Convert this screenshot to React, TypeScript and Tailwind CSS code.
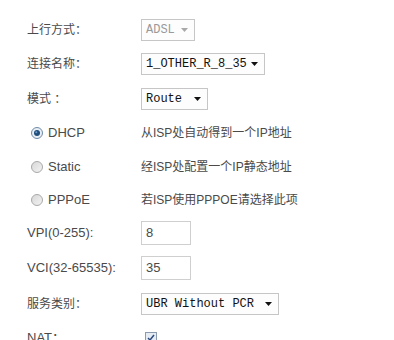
import React from "react";

const cjk = { fontFamily: '"Liberation Sans", "Noto Sans CJK SC", sans-serif' };
const mono = { fontFamily: '"Liberation Mono", "Noto Sans CJK SC", monospace' };

function Arrow({ gray }: { gray?: boolean }) {
  return (
    <svg width="7" height="4" viewBox="0 0 7 4" className="shrink-0">
      <path d="M0 0h7L3.5 4z" fill={gray ? "#a8a8a8" : "#111"} />
    </svg>
  );
}

function FakeSelect({ text, width, gray }: { text: string; width: string; gray?: boolean }) {
  return (
    <div
      className={`${width} h-[22px] border border-[#c6c6c6] bg-[#fdfdfd] flex items-center justify-between pl-[4px] pr-[6px] text-[12px] ${gray ? "text-[#9a9a9a]" : "text-[#111]"}`}
      style={mono}
    >
      <span className="whitespace-pre">{text}</span>
      <Arrow gray={gray} />
    </div>
  );
}

function Label({ children }: { children: React.ReactNode }) {
  return (
    <div className="w-[114px] shrink-0 text-[12px] text-[#4a4a4a]" style={cjk}>
      {children}
    </div>
  );
}

function Radio({ checked }: { checked?: boolean }) {
  return checked ? (
    <svg width="12" height="12" viewBox="0 0 12 12" className="shrink-0">
      <circle cx="6" cy="6" r="5.5" fill="#e8eef4" stroke="#6e8aa6" />
      <circle cx="6" cy="6" r="3" fill="#1f4e7a" />
      <circle cx="5.3" cy="5.3" r="1" fill="#6f9ccc" />
    </svg>
  ) : (
    <svg width="12" height="12" viewBox="0 0 12 12" className="shrink-0">
      <defs>
        <linearGradient id="rg" x1="0" y1="0" x2="1" y2="1">
          <stop offset="0" stopColor="#d6d6d6" />
          <stop offset="1" stopColor="#f4f4f4" />
        </linearGradient>
      </defs>
      <circle cx="6" cy="6" r="5.5" fill="url(#rg)" stroke="#a9a9a9" />
    </svg>
  );
}

function RadioRow({ h, checked, name, desc }: { h: string; checked?: boolean; name: string; desc: string }) {
  return (
    <div className={`${h} flex items-center`}>
      <div className="w-[114px] shrink-0 flex items-center gap-[5px] pl-[4px] text-[13px] text-[#4a4a4a]" style={cjk}>
        <Radio checked={checked} />
        <span>{name}</span>
      </div>
      <div className="text-[12px] text-[#4a4a4a]" style={cjk}>
        {desc}
      </div>
    </div>
  );
}

function TextInput({ value }: { value: string }) {
  return (
    <div
      className="w-[50px] h-[24px] border border-[#cfcfcf] bg-white flex items-center pl-[4px] text-[13px] text-[#4a4a4a]"
      style={cjk}
    >
      {value}
    </div>
  );
}

export default function App() {
  return (
    <div className="w-[394px] h-[340px] overflow-hidden bg-white pl-[27px] pt-[13px]">
      <div className="h-[34px] flex items-center">
        <Label>上行方式：</Label>
        <FakeSelect text="ADSL" width="w-[54px]" gray />
      </div>
      <div className="h-[34px] flex items-center">
        <Label>连接名称：</Label>
        <FakeSelect text="1_OTHER_R_8_35" width="w-[124px]" />
      </div>
      <div className="h-[35px] flex items-center">
        <Label>模式 ：</Label>
        <FakeSelect text="Route" width="w-[67px]" />
      </div>
      <RadioRow h="h-[34px]" checked name="DHCP" desc="从ISP处自动得到一个IP地址" />
      <RadioRow h="h-[33px]" name="Static" desc="经ISP处配置一个IP静态地址" />
      <RadioRow h="h-[33px]" name="PPPoE" desc="若ISP使用PPPOE请选择此项" />
      <div className="h-[34px] flex items-center">
        <div className="w-[114px] shrink-0 text-[13px] text-[#4a4a4a]" style={cjk}>VPI(0-255):</div>
        <TextInput value="8" />
      </div>
      <div className="h-[36px] flex items-center">
        <div className="w-[114px] shrink-0 text-[13px] text-[#4a4a4a]" style={cjk}>VCI(32-65535):</div>
        <TextInput value="35" />
      </div>
      <div className="h-[35px] flex items-center">
        <Label>服务类别：</Label>
        <FakeSelect text="UBR Without PCR" width="w-[138px]" />
      </div>
      <div className="h-[34px] flex items-center">
        <div className="w-[114px] shrink-0 text-[13px] text-[#4a4a4a]" style={cjk}>NAT：</div>
        <div className="ml-[4px] w-[12px] h-[12px] border border-[#8a9bb0] bg-[#e6ecf4] flex items-center justify-center">
          <svg width="8" height="8" viewBox="0 0 8 8">
            <path d="M1 4l2 2 4-5" stroke="#2a4a80" strokeWidth="1.5" fill="none" />
          </svg>
        </div>
      </div>
    </div>
  );
}
